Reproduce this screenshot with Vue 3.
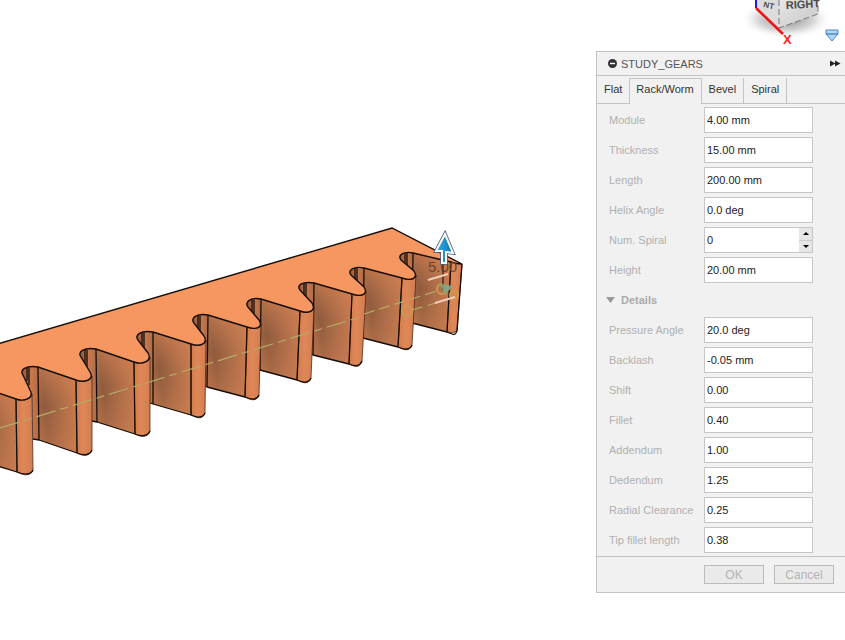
<script setup>
import { ref, reactive } from 'vue'

const tabs = ['Flat', 'Rack/Worm', 'Bevel', 'Spiral']
const activeTab = ref('Rack/Worm')

const mainFields = reactive([
  { id: 'module', label: 'Module', value: '4.00 mm' },
  { id: 'thickness', label: 'Thickness', value: '15.00 mm' },
  { id: 'length', label: 'Length', value: '200.00 mm' },
  { id: 'helix', label: 'Helix Angle', value: '0.0 deg' },
  { id: 'spiral', label: 'Num. Spiral', value: '0', stepper: true },
  { id: 'height', label: 'Height', value: '20.00 mm' },
])

const detailFields = reactive([
  { id: 'pressure', label: 'Pressure Angle', value: '20.0 deg' },
  { id: 'backlash', label: 'Backlash', value: '-0.05 mm' },
  { id: 'shift', label: 'Shift', value: '0.00' },
  { id: 'fillet', label: 'Fillet', value: '0.40' },
  { id: 'addendum', label: 'Addendum', value: '1.00' },
  { id: 'dedendum', label: 'Dedendum', value: '1.25' },
  { id: 'clearance', label: 'Radial Clearance', value: '0.25' },
  { id: 'tip', label: 'Tip fillet length', value: '0.38' },
])

const detailsOpen = ref(true)

function step(field, amount) {
  field.value = String(Math.max(0, Number(field.value) + amount))
}

// Each tooth: a = root (leftmost), f = flank start, e = flank end,
// r = tip right, and lf / le / lr = the same points on the lower face.
const teeth = [
  { a: [-36, 389], f: [-22, 386], e: [16, 399], r: [32, 394], lf: [-22, 460], le: [17, 472], lr: [33, 470] },
  { a: [22, 371], f: [38, 367], e: [76, 380], r: [92, 376], lf: [39, 440], le: [77, 453], lr: [92, 450] },
  { a: [80, 353], f: [96, 349], e: [134, 362], r: [150, 357], lf: [97, 422], le: [135, 434], lr: [150, 431] },
  { a: [137, 336], f: [153, 332], e: [191, 344], r: [206, 340], lf: [153, 404], le: [191, 415], lr: [205, 413] },
  { a: [193, 319], f: [208, 315], e: [247, 327], r: [261, 324], lf: [207, 387], le: [245, 397], lr: [259, 395] },
  { a: [247, 303], f: [261, 299], e: [300, 311], r: [314, 307], lf: [260, 370], le: [297, 380], lr: [311, 378] },
  { a: [299, 286], f: [314, 283], e: [352, 294], r: [366, 291], lf: [313, 355], le: [349, 364], lr: [362, 361] },
  { a: [350, 271], f: [364, 268], e: [402, 278], r: [416, 275], lf: [363, 338], le: [398, 347], lr: [412, 345] },
  { a: [400, 256], f: [413, 253], e: [451, 262], r: [462, 264], lf: [412, 323], le: [447, 332], lr: [457, 331] },
]

const isLast = (t) => t === teeth[teeth.length - 1]

const topFace =
  'M-40 355 L392 228 L462 264 Q456 264 451 262 L413 253 ' +
  teeth
    .slice(0, -1)
    .map((t, i) => ({ t, n: teeth[i + 1] }))
    .reverse()
    .map(({ t, n }) =>
      `L${n.f[0]} ${n.f[1]} C${n.a[0] + 4} ${n.f[1] - 2} ${n.a[0] - 3} ${n.a[1] - 1} ${n.a[0] + 1} ${n.a[1] + 4} ` +
      `L${t.r[0] - 2} ${t.r[1] - 4} C${t.r[0] + 3} ${t.r[1] + 4} ${t.e[0] + 8} ${t.e[1] + 3} ${t.e[0]} ${t.e[1]}`)
    .join(' ') +
  ' L-22 386 Z'

const flank = (t) => `M${t.f} L${t.e} L${t.le} L${t.lf} Z`

const nose = (t) =>
  isLast(t)
    ? `M${t.e} L${t.r} L${t.lr} Q${t.lr[0] - 4} ${t.lr[1] + 3} ${t.le} Z`
    : `M${t.e} C${t.e[0] + 8} ${t.e[1] + 3} ${t.r[0] + 1} ${t.r[1] + 4} ${t.r} L${t.lr} ` +
      `C${t.lr[0] - 2} ${t.lr[1] + 6} ${t.le[0] + 7} ${t.le[1] + 4} ${t.le} Z`

const noseEdge = (t) =>
  `M${t.e} L${t.le} C${t.le[0] + 7} ${t.le[1] + 3} ${t.lr[0] - 2} ${t.lr[1] + 5} ${t.lr}`

const root = (t, i) => {
  const left = i ? teeth[i - 1].lr[0] : t.a[0]
  return (
    `M${t.f} L${t.lf} L${left} ${t.lf[1] - 1} L${t.a[0]} ${t.a[1] + 4} ` +
    `C${t.a[0] - 2} ${t.a[1] - 1} ${t.a[0] + 2} ${t.f[1] - 2} ${t.f} Z`
  )
}
</script>

<template>
  <main class="workspace">
    <svg class="scene" viewBox="0 0 596 640" preserveAspectRatio="xMinYMin slice" role="img" aria-label="Gear rack model">
      <defs>
        <linearGradient id="flank" x1="0" y1="0.62" x2="1" y2="0.38">
          <stop offset="0" stop-color="#a46645" />
          <stop offset="0.2" stop-color="#8f5b3d" />
          <stop offset="0.6" stop-color="#ad6c48" />
          <stop offset="1" stop-color="#c97b50" />
        </linearGradient>
        <linearGradient id="glow" x1="0" y1="0" x2="0" y2="1">
          <stop offset="0" stop-color="#dc8453" stop-opacity="0.55" />
          <stop offset="0.45" stop-color="#c67b50" stop-opacity="0" />
          <stop offset="1" stop-color="#d98555" stop-opacity="0.45" />
        </linearGradient>
        <linearGradient id="nose">
          <stop offset="0" stop-color="#d17c4e" />
          <stop offset="0.45" stop-color="#e08757" />
          <stop offset="1" stop-color="#d17d51" />
        </linearGradient>
        <linearGradient id="root">
          <stop offset="0" stop-color="#8a5639" />
          <stop offset="0.5" stop-color="#c9794d" />
          <stop offset="1" stop-color="#b06c47" />
        </linearGradient>
        <linearGradient id="arrow">
          <stop offset="0" stop-color="#35aee6" />
          <stop offset="1" stop-color="#0876b8" />
        </linearGradient>
      </defs>

      <template v-for="(t, i) in teeth" :key="i">
        <path :d="root(t, i)" fill="url(#root)" />
        <path :d="flank(t)" fill="url(#flank)" />
        <path :d="flank(t)" fill="url(#glow)" />
        <path class="edge" :d="`M${t.f} L${t.lf} M${t.a[0] + 5} ${t.a[1] - 3} v13 M${t.a[0] + 7} ${t.a[1] - 3} v17`" />
        <path class="edge" :d="`M${i ? teeth[i - 1].lr[0] : -22} ${t.lf[1] - 1} L${t.lf} L${t.le}`" />
      </template>
      <template v-for="(t, i) in teeth" :key="i">
        <path class="silhouette" :d="nose(t)" fill="url(#nose)" />
        <path class="edge" :d="noseEdge(t)" />
      </template>
      <path class="edge" d="M462 264 L457 331" />
      <path class="silhouette top" :d="topFace" />

      <g class="axis">
        <path d="M0 428 L360 317" stroke-dasharray="20 5 8 5" />
        <path d="M364 314 L440 290 M412 310 L456 297" stroke-dasharray="11 5" />
      </g>
      <g class="marks">
        <circle cx="407" cy="311" r="5" />
        <circle cx="442" cy="289" r="5" />
        <circle cx="454" cy="295" r="4" />
      </g>
      <text class="dimension" x="428" y="272">5.00</text>
      <path d="M443 264 V290" stroke="#4c3325" stroke-width="1.6" />
      <path d="M440 284 L454 286 L445 294 Z" fill="#7ba78a" opacity="0.9" />
      <path d="M428 280 L448 274 M435 303 L455 297" stroke="#f2cdb6" stroke-width="2" />
      <g class="arrow">
        <path d="M442 263 V251 H436 L445 234 L453 253 L446 252 V263 Z" stroke="#4a5f80" stroke-width="3.6" />
        <path d="M442 263 V251 H436 L445 234 L453 253 L446 252 V263 Z" stroke="#fff" stroke-width="2" />
      </g>
    </svg>

    <div class="side">
      <svg class="viewcube" viewBox="0 0 249 51" aria-label="View cube" role="img">
        <defs>
          <linearGradient id="cubeFace" x1="0" y1="0" x2="1" y2="1">
            <stop offset="0" stop-color="#e6e6e6" />
            <stop offset="1" stop-color="#c7c7c7" />
          </linearGradient>
          <radialGradient id="cubeShade">
            <stop offset="0" stop-color="#666" stop-opacity="0.85" />
            <stop offset="0.6" stop-color="#999" stop-opacity="0.4" />
            <stop offset="1" stop-color="#fff" stop-opacity="0" />
          </radialGradient>
        </defs>
        <ellipse cx="190" cy="19" rx="46" ry="20" fill="url(#cubeShade)" />
        <path d="M160 0 H183 V28 L160 8 Z" fill="#dcdcdc" />
        <path d="M183 0 H222 V14 L183 28 Z" fill="url(#cubeFace)" />
        <path d="M183 0 V28 L222 14 V0" fill="none" stroke="#777" stroke-dasharray="6 3" />
        <text class="face" x="190" y="9" transform="rotate(-3 190 9)">RIGHT</text>
        <text class="face small" x="167" y="7" transform="rotate(12 167 7)">NT</text>
        <path d="M160 0 V8" stroke="#1620dc" stroke-width="2" />
        <path d="M160 8 L187 34" stroke="#f01313" stroke-width="2.5" />
        <text class="x-axis" x="187" y="44">X</text>
        <path d="M230 30 H242 V34 H230 Z M230 34 H242 L236 41 Z" fill="#add8f7" stroke="#5187bd" />
      </svg>

      <form class="panel" @submit.prevent>
        <header class="title">
          <svg width="9" height="9" viewBox="0 0 9 9" aria-hidden="true">
            <circle cx="4.5" cy="4.5" r="4.5" fill="#333" />
            <path d="M2 4.5 H7" stroke="#fff" stroke-width="1.4" />
          </svg>
          <h1>STUDY_GEARS</h1>
          <button type="button" class="expand" aria-label="Expand">
            <svg width="11" height="7" viewBox="0 0 11 7"><path d="M0 0.5 L5.5 3.5 L0 6.5 Z M5 0.5 L10.5 3.5 L5 6.5 Z" fill="#222" /></svg>
          </button>
        </header>

        <nav class="tabs" role="tablist">
          <button
            v-for="tab in tabs"
            :key="tab"
            type="button"
            role="tab"
            :class="{ active: tab === activeTab }"
            :aria-selected="tab === activeTab"
            @click="activeTab = tab"
          >{{ tab }}</button>
        </nav>

        <div class="fields">
          <div v-for="field in mainFields" :key="field.id" class="row">
            <label :for="field.id">{{ field.label }}</label>
            <div class="control">
              <input :id="field.id" v-model="field.value" type="text" />
              <div v-if="field.stepper" class="stepper">
                <button type="button" aria-label="Increase" @click="step(field, 1)">
                  <svg width="6" height="3" viewBox="0 0 6 3"><path d="M0 3 L3 0 L6 3 Z" /></svg>
                </button>
                <button type="button" aria-label="Decrease" @click="step(field, -1)">
                  <svg width="6" height="3" viewBox="0 0 6 3"><path d="M0 0 L3 3 L6 0 Z" /></svg>
                </button>
              </div>
            </div>
          </div>

          <button type="button" class="details" :aria-expanded="detailsOpen" @click="detailsOpen = !detailsOpen">
            <svg width="9" height="6" viewBox="0 0 9 6"><path d="M0 0 H9 L4.5 6 Z" fill="#999" /></svg>
            Details
          </button>

          <template v-if="detailsOpen">
            <div v-for="field in detailFields" :key="field.id" class="row">
              <label :for="field.id">{{ field.label }}</label>
              <div class="control">
                <input :id="field.id" v-model="field.value" type="text" />
              </div>
            </div>
          </template>
        </div>

        <footer class="actions">
          <button type="submit" disabled>OK</button>
          <button type="button" disabled>Cancel</button>
        </footer>
      </form>
    </div>
  </main>
</template>

<style>
body {
  background: #fff;
}
</style>

<style scoped>
.workspace {
  display: grid;
  grid-template-columns: minmax(0, 1fr) 249px;
  min-height: 100vh;
  overflow: hidden;
  font: 11px/14px "Liberation Sans", Arial, sans-serif;
  color: #333;
}

.scene {
  display: block;
  width: 100%;
  height: 100%;
}

.edge {
  fill: none;
  stroke: #150d08;
  stroke-width: 1.3;
  stroke-linejoin: round;
}

.silhouette {
  stroke: #4a2b1a;
  stroke-width: 0.8;
}

.silhouette.top {
  fill: #f69761;
  stroke: #150d08;
  stroke-width: 1.4;
}

.axis path {
  fill: none;
  stroke: #b3ac66;
  stroke-width: 1.2;
}

.marks circle {
  fill: none;
  stroke: #c69d4c;
  stroke-width: 2;
}

.dimension {
  font-size: 15px;
  fill: #6b4531;
}

.arrow path {
  fill: url(#arrow);
}

.side {
  display: flex;
  flex-direction: column;
}

.viewcube {
  display: block;
  width: 100%;
  height: 51px;
}

.face {
  font-size: 11px;
  font-weight: bold;
  fill: #4b4b4b;
}

.small {
  font-size: 8px;
}

.x-axis {
  font-size: 13px;
  font-weight: bold;
  fill: #f22;
}

.panel {
  border: 1px solid #c3c3c3;
  border-right: 0;
  background: #f1f1f1;
}

button {
  margin: 0;
  font: inherit;
  color: inherit;
}

.title {
  display: flex;
  align-items: center;
  gap: 4px;
  height: 23px;
  padding: 0 4px 0 11px;
  border-bottom: 1px solid #c3c3c3;
}

h1 {
  flex: 1;
  margin: 0;
  font-size: 11px;
  font-weight: normal;
  color: #555;
}

.expand {
  display: flex;
  padding: 0;
  border: 0;
  background: none;
}

.tabs {
  display: flex;
  height: 28px;
  box-sizing: border-box;
  padding-top: 2px;
  border-bottom: 1px solid #c3c3c3;
}

.tabs button {
  padding: 0 7px 3px;
  border: 0;
  border-right: 1px solid #c3c3c3;
  background: #f1f1f1;
}

.tabs button.active {
  margin-bottom: -1px;
  padding: 0 7px 5px 6px;
  border-top: 1px solid #c3c3c3;
}

.fields {
  padding: 1px 0;
}

.row {
  display: grid;
  grid-template-columns: 95px 109px;
  align-items: center;
  height: 30px;
  padding-left: 12px;
}

.row label {
  color: #b0b0b0;
}

.control {
  display: flex;
  height: 26px;
  box-sizing: border-box;
  border: 1px solid #c6c6c6;
  background: #fff;
}

.control input {
  flex: 1;
  min-width: 0;
  padding: 0 2px;
  border: 0;
  background: none;
  font: inherit;
  color: #222;
}

.stepper {
  display: grid;
  width: 13px;
  gap: 1px;
  background: #ccc;
}

.stepper button {
  display: grid;
  place-items: center;
  padding: 0;
  border: 0;
  background: #e6e6e6;
}

.details {
  display: flex;
  align-items: center;
  gap: 6px;
  height: 30px;
  padding: 0 9px;
  border: 0;
  background: none;
  font-weight: bold;
  color: #aaa;
}

.actions {
  display: flex;
  gap: 10px;
  padding: 8px 11px 8px 107px;
  border-top: 1px solid #c3c3c3;
}

.actions button {
  flex: 1;
  height: 19px;
  padding: 0;
  border: 1px solid #bbb;
  background: #eaeaea;
  font-size: 12px;
  color: #b3b3b3;
}
</style>
